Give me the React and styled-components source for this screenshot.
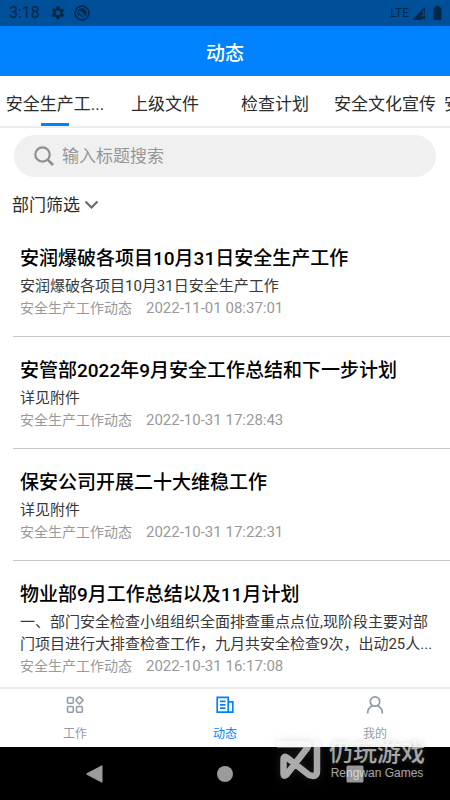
import React, { useState } from "react";
import styled, { createGlobalStyle } from "styled-components";

const GlobalStyle = createGlobalStyle`
  *, *::before, *::after { box-sizing: border-box; }
  body {
    margin: 0;
    background: #fff;
    color: #2b2b2b;
    font-family: Roboto, "Noto Sans CJK SC", sans-serif;
    font-weight: 400;
  }
  button, input { font: inherit; color: inherit; }
  button { border: 0; padding: 0; background: none; cursor: pointer; }
  h1, h2, p, ul { margin: 0; padding: 0; }
`;

const Screen = styled.div`
  position: relative;
  display: flex;
  flex-direction: column;
  height: 100vh;
  overflow: hidden;
`;

const StatusBar = styled.div`
  display: flex;
  align-items: center;
  flex: none;
  height: 26px;
  padding: 0 5px 0 9px;
  background: #005099;
  color: #012849;
`;

const Clock = styled.span`
  font-size: 16px;
  line-height: 28px;
  margin-right: 10px;
`;

const StatusIcons = styled.div`
  display: flex;
  align-items: center;
  gap: 8px;
  flex: 1;
`;

const Signal = styled.div`
  display: flex;
  align-items: center;
  font-size: 12px;
  gap: 3px;
`;

const Header = styled.header`
  display: flex;
  align-items: center;
  justify-content: center;
  flex: none;
  height: 50px;
  background: #0081ff;
  color: #fff;
`;

const HeaderTitle = styled.h1`
  font-size: 19px;
  font-weight: 500;
`;

const Tabs = styled.nav`
  display: flex;
  flex: none;
  height: 52px;
  overflow: hidden;
  border-bottom: 2px solid #ededed;
`;

const Tab = styled.button`
  display: flex;
  flex-direction: column;
  align-items: center;
  justify-content: space-between;
  flex: none;
  min-width: 110px;
  padding: 16px 4px 0;
  font-size: 17px;
  line-height: 24px;
  white-space: nowrap;

  &::after {
    content: "";
    width: 28px;
    height: 3px;
    background: ${(p) => (p.$active ? "#0081ff" : "transparent")};
  }
`;

const Main = styled.main`
  flex: 1;
  min-height: 0;
  overflow-y: auto;
  scrollbar-width: none;
`;

const SearchBox = styled.label`
  display: flex;
  align-items: center;
  gap: 8px;
  height: 42px;
  margin: 7px 14px 0;
  padding: 0 20px;
  border-radius: 21px;
  background: #f0f0f0;
  color: #8f8f8f;
`;

const SearchInput = styled.input`
  flex: 1;
  min-width: 0;
  border: 0;
  padding: 0;
  outline: 0;
  background: transparent;
  font-size: 17px;
  color: #222;

  &::placeholder { color: #969696; opacity: 1; }
`;

const FilterButton = styled.button`
  display: flex;
  align-items: center;
  gap: 4px;
  margin: 15px 12px 0;
  font-size: 17px;
  line-height: 26px;
`;

const List = styled.ul`
  list-style: none;
  margin-top: 7px;
  padding-left: 13px;
`;

const Item = styled.li`
  padding: 18px 17px 17px 7px;
  border-bottom: 1px solid #c8c8c8;
`;

const ItemTitle = styled.h2`
  font-size: 19px;
  line-height: 32px;
  font-weight: 500;
  color: #000;
`;

const Summary = styled.p`
  font-size: 15px;
  line-height: 22px;
  color: #383838;
`;

const Meta = styled.p`
  display: flex;
  align-items: baseline;
  gap: 14px;
  font-size: 14px;
  line-height: 22px;
  color: #999;
`;

const Time = styled.time`
  font-size: 15px;
`;

const BottomBar = styled.nav`
  display: grid;
  grid-template-columns: repeat(3, 1fr);
  flex: none;
  height: 60px;
  border-top: 2px solid #ededed;
  background: #fff;
`;

const BottomTab = styled.button`
  display: flex;
  flex-direction: column;
  align-items: center;
  gap: 10px;
  padding-top: 6px;
  font-size: 12px;
  line-height: 18px;
  color: ${(p) => (p.$active ? "#0081ff" : "#929ca8")};
`;

const SystemNav = styled.div`
  display: grid;
  grid-template-columns: repeat(3, 1fr);
  flex: none;
  height: 53px;
  padding: 0 30px;
  background: #000;
  color: #9b9b9b;
`;

const SystemButton = styled.button`
  display: flex;
  align-items: center;
  justify-content: center;
`;

const Watermark = styled.div`
  position: absolute;
  right: 25px;
  bottom: 18px;
  display: flex;
  align-items: center;
  gap: 8px;
  color: rgba(255, 255, 255, 0.64);
  pointer-events: none;
  text-shadow: 0 0 6px rgba(120, 120, 120, 0.4);

  svg { filter: drop-shadow(0 0 4px rgba(120, 120, 120, 0.4)); }
`;

const WatermarkText = styled.div`
  display: flex;
  flex-direction: column;
`;

const WatermarkName = styled.span`
  font-family: "Noto Sans CJK SC", sans-serif;
  font-size: 24px;
  line-height: 26px;
  font-weight: 500;
`;

const WatermarkLatin = styled.span`
  font-family: "Liberation Sans", sans-serif;
  font-size: 12px;
  line-height: 18px;
  text-align: center;
`;

const GearIcon = () => (
  <svg width="16" height="16" viewBox="0 0 24 24" fill="currentColor" aria-hidden="true">
    <path d="M19.14 12.94c.04-.3.06-.61.06-.94s-.02-.64-.07-.94l2.03-1.58a.49.49 0 0 0 .12-.61l-1.92-3.32a.49.49 0 0 0-.59-.22l-2.39.96a7 7 0 0 0-1.62-.94l-.36-2.54A.48.48 0 0 0 13.92 2h-3.84a.48.48 0 0 0-.48.41l-.36 2.54c-.59.24-1.13.57-1.62.94l-2.39-.96a.48.48 0 0 0-.59.22L2.72 8.47a.48.48 0 0 0 .12.61l2.03 1.58a6.2 6.2 0 0 0 0 1.88l-2.03 1.58a.49.49 0 0 0-.12.61l1.92 3.32c.12.22.37.29.59.22l2.39-.96c.5.38 1.03.7 1.62.94l.36 2.54c.05.24.24.41.48.41h3.84c.24 0 .44-.17.47-.41l.36-2.54a7 7 0 0 0 1.62-.94l2.39.96c.22.08.47 0 .59-.22l1.92-3.32a.48.48 0 0 0-.12-.61zM12 15.6a3.6 3.6 0 1 1 0-7.2 3.6 3.6 0 0 1 0 7.2z" />
  </svg>
);

const BadgeIcon = () => (
  <svg width="16" height="16" viewBox="0 0 16 16" fill="none" stroke="currentColor" aria-hidden="true">
    <path d="M8 14.900A6.900 6.900 0 1 1 12.500 13.200" strokeWidth="1.500" />
    <path d="M8 14.900q2.600 0 4.500-1.700" strokeWidth="1.500" />
    <path d="M4.800 10.800A4.200 4.200 0 1 1 11 10.900" strokeWidth="1.100" />
    <path d="M5.600 5.300a3.600 3.600 0 0 1 5.600 4.900z" fill="currentColor" stroke="none" />
    <path d="M4.600 8.200l5 4.400" strokeWidth="1.200" />
  </svg>
);

const SignalIcon = () => (
  <svg width="14" height="13" viewBox="0 0 14 13" aria-hidden="true">
    <path d="M13 0v8H9.500v5H0z" fill="currentColor" />
    <path d="M11.500 3.500v4" stroke="#005099" strokeWidth="1.500" />
    <path d="M10 9l3 3M13 9l-3 3" stroke="currentColor" strokeWidth="1.200" />
  </svg>
);

const BatteryIcon = () => (
  <svg width="16" height="14" viewBox="0 0 16 14" fill="currentColor" aria-hidden="true">
    <path d="M6.500 0h4v1.500h1.200q.8 0 .8.800v10.900q0 .8-.8.800H5.300q-.8 0-.8-.8V2.300q0-.8.8-.8h1.200z" />
  </svg>
);

const SearchIcon = () => (
  <svg width="20" height="20" viewBox="0 0 20 20" fill="none" stroke="currentColor" strokeWidth="2.200" aria-hidden="true">
    <circle cx="8.500" cy="8.500" r="7.200" />
    <path d="M13.600 13.600L19 19" strokeWidth="2.600" />
  </svg>
);

const ChevronIcon = () => (
  <svg width="15" height="10" viewBox="0 0 15 10" fill="none" stroke="#6b6b6b" strokeWidth="2.200" aria-hidden="true">
    <path d="M1.500 1.500l6 6 6-6" />
  </svg>
);

const GridIcon = () => (
  <svg width="18" height="20" viewBox="0 0 18 20" fill="none" stroke="currentColor" strokeWidth="1.600" aria-hidden="true">
    <rect x="1.500" y="2.500" width="5.800" height="5.800" rx="1" />
    <rect x="1.500" y="11.500" width="5.800" height="5.800" rx="1" />
    <rect x="10.500" y="11.500" width="5.800" height="5.800" rx="1" />
    <path d="M12.700 2.100q.7-.7 1.400 0l2.400 2.500q.7.700 0 1.400l-2.400 2.500q-.7.700-1.400 0l-2.400-2.500q-.7-.7 0-1.400z" />
  </svg>
);

const NewsIcon = () => (
  <svg width="18" height="20" viewBox="0 0 18 20" fill="none" stroke="currentColor" strokeWidth="1.700" aria-hidden="true">
    <path d="M12.200 17.200H1.200V2.300h11v14.900h4.600V6.800h-4.600" />
    <path d="M4 6.400h5.500M4 9.800h5.500M4 13.200h5.500" />
  </svg>
);

const UserIcon = () => (
  <svg width="18" height="20" viewBox="0 0 18 20" fill="none" stroke="currentColor" strokeWidth="1.800" aria-hidden="true">
    <circle cx="9" cy="6.500" r="4.700" />
    <path d="M1.700 18.500v-1c0-3.500 2.600-6.300 5.400-6.900M16.300 18.500v-1c0-3.500-2.600-6.300-5.400-6.900" />
  </svg>
);

const BackIcon = () => (
  <svg width="18" height="18" viewBox="0 0 18 18" fill="currentColor" aria-hidden="true">
    <path d="M15.500 0.500q1-.5 1 .6v15.800q0 1.100-1 .6L.8 9.700q-1.100-.7 0-1.400z" />
  </svg>
);

const HomeIcon = () => (
  <svg width="18" height="18" viewBox="0 0 18 18" fill="currentColor" aria-hidden="true">
    <circle cx="9" cy="9" r="8" />
  </svg>
);

const RecentIcon = () => (
  <svg width="18" height="18" viewBox="0 0 18 18" fill="currentColor" aria-hidden="true">
    <rect x="0.500" y="0.500" width="17" height="17" rx="1.500" />
  </svg>
);

const WatermarkLogo = () => (
  <svg width="45" height="40" viewBox="0 0 45 40" fill="none" stroke="currentColor" strokeWidth="6.500" strokeLinejoin="round" aria-hidden="true">
    <path d="M1 4.300H29q5 0 2 4L11 34q-3.500 4-3.500-1V20q0-5 4-2L33 35q8 3 8-4V2" />
  </svg>
);

const tabs = ["安全生产工...", "上级文件", "检查计划", "安全文化宣传", "安全生产法规"];

const posts = [
  {
    title: "安润爆破各项目10月31日安全生产工作",
    summary: "安润爆破各项目10月31日安全生产工作",
    time: "2022-11-01 08:37:01",
  },
  {
    title: "安管部2022年9月安全工作总结和下一步计划",
    summary: "详见附件",
    time: "2022-10-31 17:28:43",
  },
  {
    title: "保安公司开展二十大维稳工作",
    summary: "详见附件",
    time: "2022-10-31 17:22:31",
  },
  {
    title: "物业部9月工作总结以及11月计划",
    summary:
      "一、部门安全检查小组组织全面排查重点点位,现阶段主要对部门项目进行大排查检查工作，九月共安全检查9次，出动25人...",
    time: "2022-10-31 16:17:08",
  },
];

const sections = [
  { label: "工作", Icon: GridIcon },
  { label: "动态", Icon: NewsIcon },
  { label: "我的", Icon: UserIcon },
];

export default function App() {
  const [tab, setTab] = useState(0);
  const [section, setSection] = useState(1);

  return (
    <Screen lang="zh-CN">
      <GlobalStyle />
      <StatusBar>
        <Clock>3:18</Clock>
        <StatusIcons>
          <GearIcon />
          <BadgeIcon />
        </StatusIcons>
        <Signal>
          LTE
          <SignalIcon />
          <BatteryIcon />
        </Signal>
      </StatusBar>
      <Header>
        <HeaderTitle>动态</HeaderTitle>
      </Header>
      <Tabs>
        {tabs.map((label, i) => (
          <Tab key={label} type="button" $active={i === tab} onClick={() => setTab(i)}>
            {label}
          </Tab>
        ))}
      </Tabs>
      <Main>
        <SearchBox>
          <SearchIcon />
          <SearchInput type="text" placeholder="输入标题搜索" aria-label="输入标题搜索" />
        </SearchBox>
        <FilterButton type="button">
          部门筛选
          <ChevronIcon />
        </FilterButton>
        <List>
          {posts.map((post) => (
            <Item key={post.title}>
              <ItemTitle>{post.title}</ItemTitle>
              <Summary>{post.summary}</Summary>
              <Meta>
                <span>安全生产工作动态</span>
                <Time>{post.time}</Time>
              </Meta>
            </Item>
          ))}
        </List>
      </Main>
      <BottomBar>
        {sections.map(({ label, Icon }, i) => (
          <BottomTab key={label} type="button" $active={i === section} onClick={() => setSection(i)}>
            <Icon />
            {label}
          </BottomTab>
        ))}
      </BottomBar>
      <SystemNav>
        <SystemButton type="button" aria-label="返回"><BackIcon /></SystemButton>
        <SystemButton type="button" aria-label="主页"><HomeIcon /></SystemButton>
        <SystemButton type="button" aria-label="最近任务"><RecentIcon /></SystemButton>
      </SystemNav>
      <Watermark>
        <WatermarkLogo />
        <WatermarkText>
          <WatermarkName>仍玩游戏</WatermarkName>
          <WatermarkLatin>Rengwan Games</WatermarkLatin>
        </WatermarkText>
      </Watermark>
    </Screen>
  );
}
